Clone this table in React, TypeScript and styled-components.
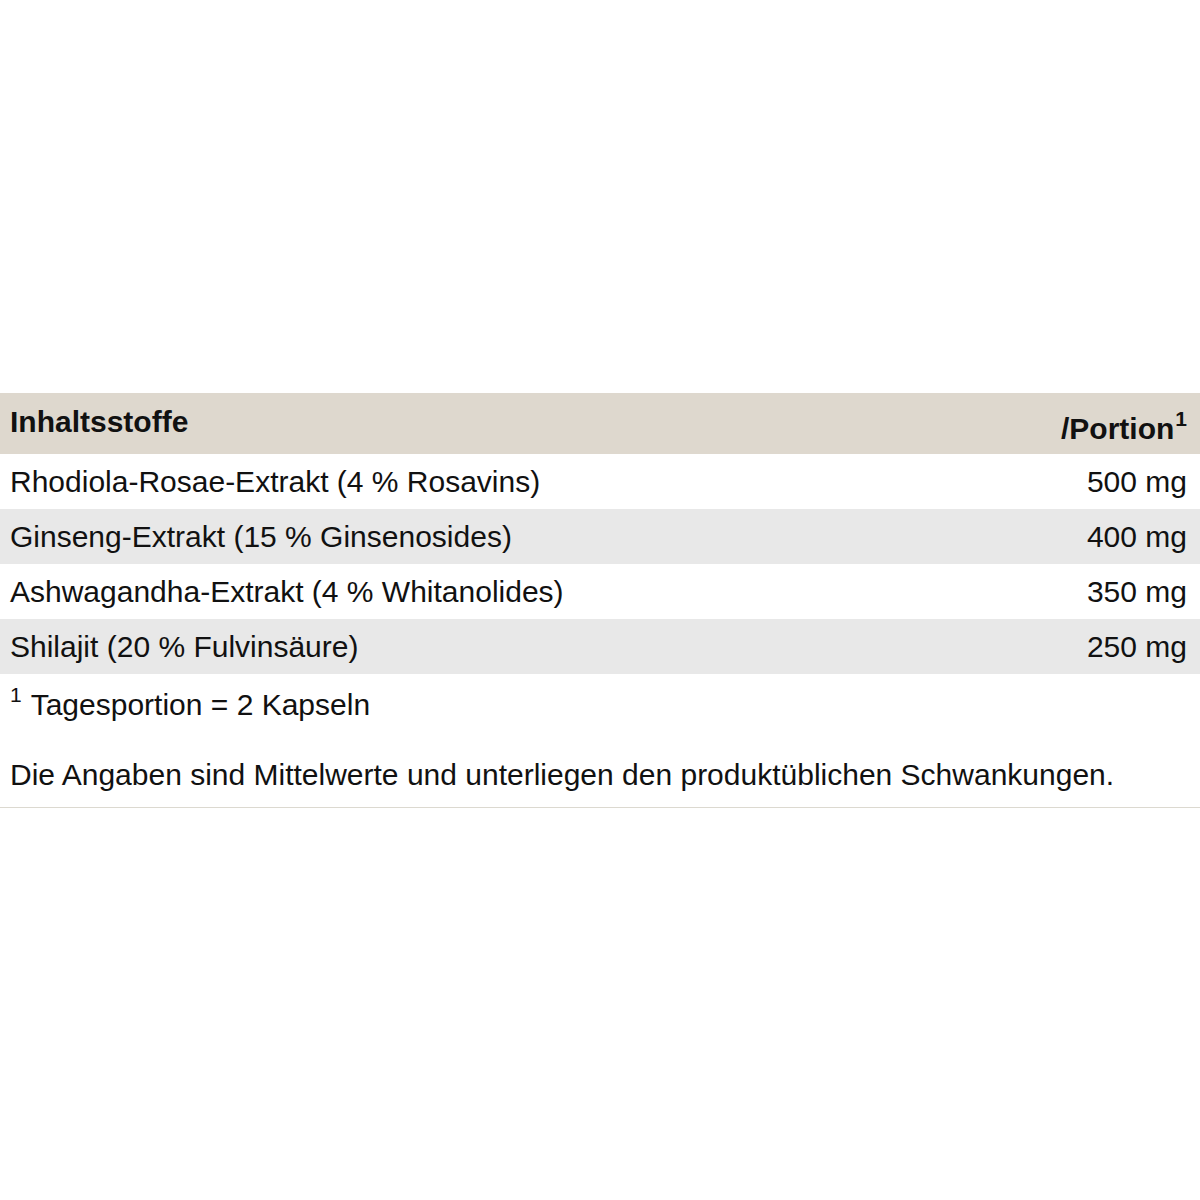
import React from 'react';
import styled, { createGlobalStyle } from 'styled-components';

const GlobalStyle = createGlobalStyle`
  html, body {
    margin: 0;
    padding: 0;
    background: #fff;
  }
  body {
    font-family: "Liberation Sans", Arial, Helvetica, sans-serif;
    color: #111;
  }
`;

const Page = styled.div`
  width: 1200px;
  padding-top: 393px;
`;

const Table = styled.table`
  width: 100%;
  border-collapse: collapse;
  font-size: 30px;
`;

const HeadRow = styled.tr`
  background: #ded8ce;
  height: 61px;
`;

const HeadCell = styled.th<{ $right?: boolean }>`
  font-weight: bold;
  text-align: ${(p) => (p.$right ? 'right' : 'left')};
  padding: ${(p) => (p.$right ? '10px 13px 0 10px' : '0 10px 4px 10px')};
  vertical-align: middle;
`;

const Sup = styled.sup`
  font-size: 21px;
  line-height: 0;
  vertical-align: 13px;
  margin-left: 1px;
`;

const Row = styled.tr<{ $shaded?: boolean }>`
  background: ${(p) => (p.$shaded ? '#e8e8e8' : '#fff')};
  height: 55px;
`;

const Cell = styled.td<{ $right?: boolean }>`
  text-align: ${(p) => (p.$right ? 'right' : 'left')};
  padding: ${(p) => (p.$right ? '0 13px 0 10px' : '0 10px')};
  vertical-align: middle;
`;

const Notes = styled.div`
  font-size: 30px;
  padding: 11px 10px 12px 10px;
  border-bottom: 1px solid #dcd9d0;
`;

const Footnote = styled.p`
  margin: 0 0 30px 0;
  line-height: 40px;
`;

const NoteSup = styled.sup`
  font-size: 21px;
  line-height: 0;
  vertical-align: 13px;
  margin-right: 9px;
`;

const Remark = styled.p`
  margin: 0;
  line-height: 40px;
`;

const rows = [
  { name: 'Rhodiola-Rosae-Extrakt (4 % Rosavins)', amount: '500 mg' },
  { name: 'Ginseng-Extrakt (15 % Ginsenosides)', amount: '400 mg' },
  { name: 'Ashwagandha-Extrakt (4 % Whitanolides)', amount: '350 mg' },
  { name: 'Shilajit (20 % Fulvinsäure)', amount: '250 mg' },
];

const App: React.FC = () => {
  return (
    <Page>
      <GlobalStyle />
      <Table>
        <thead>
          <HeadRow>
            <HeadCell>Inhaltsstoffe</HeadCell>
            <HeadCell $right>
              /Portion<Sup>1</Sup>
            </HeadCell>
          </HeadRow>
        </thead>
        <tbody>
          {rows.map((r, i) => (
            <Row key={r.name} $shaded={i % 2 === 1}>
              <Cell>{r.name}</Cell>
              <Cell $right>{r.amount}</Cell>
            </Row>
          ))}
        </tbody>
      </Table>
      <Notes>
        <Footnote>
          <NoteSup>1</NoteSup>Tagesportion = 2 Kapseln
        </Footnote>
        <Remark>Die Angaben sind Mittelwerte und unterliegen den produktüblichen Schwankungen.</Remark>
      </Notes>
    </Page>
  );
};

export default App;
